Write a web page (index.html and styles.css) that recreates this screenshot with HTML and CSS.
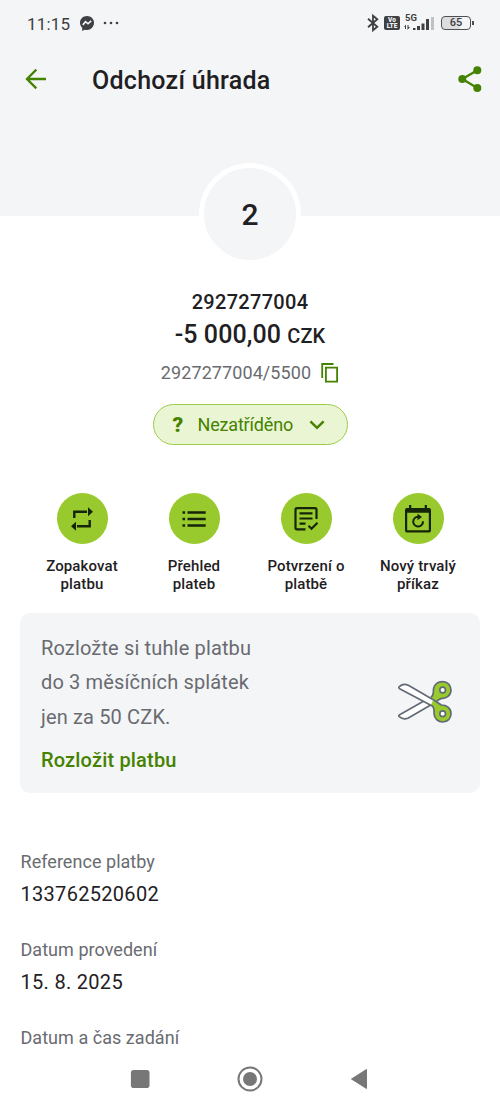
FILE: index.html
```html
<!DOCTYPE html>
<html lang="cs">
<head>
<meta charset="utf-8">
<title>Odchozí úhrada</title>
<link rel="stylesheet" href="styles.css">
</head>
<body>
<header class="header">
  <div class="status">
    <span class="clock">11:15</span>
    <svg class="messenger" width="14" height="15" viewBox="0 0 14 15"><path d="M7 0C3 0 0 2.900 0 6.800c0 2 .9 3.700 2.200 5V15l2.500-1.300c.7.2 1.500.3 2.300.3 4 0 7-3.200 7-7.200S11 0 7 0z" fill="#3e4043"/><path d="M2.800 8.900 5.600 5.700 8 7.800l3.200-2.900" fill="none" stroke="#f4f5f7" stroke-width="1.600"/></svg>
    <svg class="dots" width="16" height="4" viewBox="0 0 16 4" fill="#3e4043"><circle cx="2" cy="2" r="1.300"/><circle cx="8" cy="2" r="1.300"/><circle cx="14" cy="2" r="1.300"/></svg>
    <svg class="bluetooth" width="12" height="18" viewBox="0 0 12 18" fill="none" stroke="#3e4043" stroke-width="1.800"><path d="M1 4.800 10.300 12.700 6 16.300V1.700L10.300 5.300 1 13.200"/></svg>
    <span class="volte"><span>Vo</span><span>LTE</span></span>
    <div class="network">
      <span class="net-type">5G</span>
      <svg width="31" height="16" viewBox="0 0 31 16" fill="#3e4043"><path d="M0 12 2 9.500V14H1V12zM3.500 10h1v2h1.500L3.500 15zM9 13h2.500v2H9zM13 11h3v4h-3zM17.500 8.500h3V15h-3zM22 4h3v11h-3z"/><path d="M27 2h3v13h-3z" fill="#bfc1c4"/></svg>
    </div>
    <div class="battery"><span>65</span></div>
  </div>
  <div class="appbar">
    <svg class="back" width="22" height="22" viewBox="0 0 22 22" fill="none" stroke="#458200" stroke-width="2.300"><path d="M21 11H2M11.300 1.600 2 11l9.300 9.400"/></svg>
    <h1 class="title">Odchozí úhrada</h1>
    <svg class="share" width="24" height="26" viewBox="0 0 24 26"><path d="M19.300 4.300 4.300 13l15 9" fill="none" stroke="#458200" stroke-width="2.300"/><g fill="#458200"><circle cx="19.300" cy="4.300" r="4"/><circle cx="4.300" cy="13" r="4"/><circle cx="19.300" cy="22" r="4"/></g></svg>
  </div>
</header>
<main class="content">
  <section class="summary">
    <div class="avatar">2</div>
    <div class="name">2927277004</div>
    <div class="amount">-5 000,00 <span class="currency">CZK</span></div>
    <div class="account">
      <span class="account-number">2927277004/5500</span>
      <svg width="18" height="20" viewBox="0 0 18 20" fill="none" stroke="#458200" stroke-width="1.800"><path d="M1.200 15V1H12.500"/><path d="M4.900 4.700H16.100V18.600H4.900z"/></svg>
    </div>
    <div class="category">
      <span class="question">?</span>
      <span class="category-name">Nezatříděno</span>
      <svg width="16" height="10" viewBox="0 0 16 10" fill="none" stroke="#458200" stroke-width="2.500"><path d="M1.400 1.400 8 7.800l6.600-6.400"/></svg>
    </div>
  </section>
  <nav class="actions">
    <div class="action">
      <span class="circle"><svg width="26" height="26" viewBox="0 0 26 26"><path d="M5.300 12V5.700H18M20.700 14v6.300H8" fill="none" stroke="#14250a" stroke-width="2.400"/><path d="M19 1.200 24 5.700l-5 4.500zM7 15.800 2 20.300l5 4.500z" fill="#14250a"/></svg></span>
      <span class="label">Zopakovat<br>platbu</span>
    </div>
    <div class="action">
      <span class="circle"><svg width="26" height="26" viewBox="0 0 26 26" fill="#14250a"><path d="M1.500 5.200h2.600v2.600H1.500zM1.500 11.700h2.600v2.600H1.500zM1.500 18.200h2.600v2.600H1.500zM6.500 5.300H24.700v2.400H6.500zM6.500 11.800H24.700v2.400H6.500zM6.500 18.300H24.700v2.400H6.500z"/></svg></span>
      <span class="label">Přehled<br>plateb</span>
    </div>
    <div class="action">
      <span class="circle"><svg width="26" height="26" viewBox="0 0 26 26" fill="none" stroke="#14250a" stroke-width="2.200"><path d="M12.500 23.300H4a1.500 1.500 0 0 1-1.500-1.500V3.700A1.500 1.500 0 0 1 4 2.200H22a1.500 1.500 0 0 1 1.500 1.500V13"/><path d="M6.500 7.300h13M6.500 12.500h13M6.500 17.700h6M15.500 19.700l3 3 6-5.900"/></svg></span>
      <span class="label">Potvrzení o<br>platbě</span>
    </div>
    <div class="action">
      <span class="circle"><svg width="26" height="28" viewBox="0 0 26 28"><path d="M4 0H6.300V3H19.700V0H22V3H24a2 2 0 0 1 2 2V25.500a2 2 0 0 1-2 2H2a2 2 0 0 1-2-2V5a2 2 0 0 1 2-2H4zM2.200 7.800V25.300H23.800V7.800z" fill="#14250a" fill-rule="evenodd"/><path d="M13.200 11.700A4.900 4.900 0 1 0 18 16.300" fill="none" stroke="#14250a" stroke-width="2"/><path d="M12.500 8.800 17 12l-4.500 3.200z" fill="#14250a"/></svg></span>
      <span class="label">Nový trvalý<br>příkaz</span>
    </div>
  </nav>
  <section class="offer">
    <div>
      <p class="offer-text">Rozložte si tuhle platbu<br>do 3 měsíčních splátek<br>jen za 50 CZK.</p>
      <a class="offer-link">Rozložit platbu</a>
    </div>
    <svg class="scissors" width="56" height="45" viewBox="50 58 168 135" stroke="#626a75" stroke-width="5" stroke-linejoin="round">
      <path d="M57 171Q53 168 58 165L136 121l19 13L84 175Q69 182 57 171z" fill="#fff"/>
      <path d="M141 123Q157 116 159 99C158 76 170 66 187 66c15 0 25 11 25 25 0 17-14 26-30 26q-8 2-12 8l-16 10z" fill="#98ca2d" stroke="none"/>
      <path d="M136 121Q157 116 159 99C158 76 170 66 187 66c15 0 25 11 25 25 0 17-14 26-30 26q-8 2-12 8" fill="none"/>
      <path d="M57 81Q53 84 58 87L157 140Q162 145 161 161c1 16 12 26 26 26 15 0 25-11 25-25 0-17-14-26-29-26L84 77Q69 70 57 81z" fill="#98ca2d" stroke="none"/>
      <path d="M57 81Q53 84 58 87L151 137l9-18L84 77Q69 70 57 81z" fill="#fff" stroke="none"/>
      <path d="M183 136Q175 131 165 124L84 77Q69 70 57 81 53 84 58 87L157 140Q162 145 161 161c1 16 12 26 26 26 15 0 25-11 25-25 0-17-14-26-29-26z" fill="none"/>
      <circle cx="187" cy="91" r="8.500" fill="#fff"/><circle cx="187" cy="162" r="8.500" fill="#fff"/>
    </svg>
  </section>
  <dl class="details">
    <dt>Reference platby</dt><dd>133762520602</dd>
    <dt>Datum provedení</dt><dd>15. 8. 2025</dd>
    <dt>Datum a čas zadání</dt>
  </dl>
</main>
<footer class="navbar">
  <svg width="20" height="20" viewBox="0 0 20 20"><rect x=".9" y=".9" width="18.600" height="18.200" rx="2.800" fill="#777"/></svg>
  <svg width="26" height="26" viewBox="0 0 26 26"><circle cx="13" cy="13" r="11.500" fill="none" stroke="#777" stroke-width="2"/><circle cx="13" cy="13" r="7" fill="#777"/></svg>
  <svg width="18" height="22" viewBox="0 0 18 22"><path d="M16.500 1.500V20.500L1.500 11z" fill="#777" stroke="#777" stroke-linejoin="round"/></svg>
</footer>
</body>
</html>
```
FILE: styles.css
```css
* { box-sizing: border-box; }
body {
  margin: 0;
  height: 1111px;
  display: flex;
  flex-direction: column;
  overflow: hidden;
  background: #fff;
  color: #1f2023;
  font-family: Roboto, sans-serif;
}
svg { display: block; flex: none; }
.header { height: 216px; flex: none; background: #f4f5f7; }
.status {
  height: 46px;
  padding: 0 29px 0 27px;
  display: flex;
  align-items: center;
  color: #3e4043;
}
.clock { width: 53px; font-size: 17px; letter-spacing: 0.2px; line-height: 20px; padding-top: 1px; }
.dots { margin-left: 9px; }
.bluetooth { margin-left: auto; }
.volte {
  width: 16px;
  height: 14px;
  margin-left: 5px;
  padding-top: 1px;
  border-radius: 2px;
  background: #3e4043;
  color: #f4f5f7;
  font-size: 6.500px;
  font-weight: 900;
  line-height: 6px;
  text-align: center;
}
.volte span { display: block; }
.network { position: relative; margin-left: 4px; }
.net-type { position: absolute; left: 1px; top: -2px; font-size: 9.500px; line-height: 10px; font-weight: 700; }
.battery {
  position: relative;
  width: 30px;
  height: 14px;
  margin-left: 6px;
  border: 1.500px solid #4d4f52;
  border-radius: 4px;
  background: linear-gradient(90deg, #dcdddf 65%, #f4f5f7 65%);
  font-size: 11px;
  font-weight: 500;
  line-height: 12px;
  text-align: center;
}
.battery::after {
  content: "";
  position: absolute;
  right: -4px;
  top: 4px;
  width: 2px;
  height: 4px;
  background: #4d4f52;
}
.appbar { height: 66px; padding: 0 18px 0 25px; display: flex; align-items: center; }
.title { margin: 4px 0 0 45px; font-size: 25px; line-height: 30px; font-weight: 500; letter-spacing: 0.270px; }
.share { margin-left: auto; }
.content { flex: 1; min-height: 0; overflow: hidden; margin-top: -53px; position: relative; }
.summary { display: flex; flex-direction: column; align-items: center; }
.avatar {
  width: 102px;
  height: 102px;
  border: 5px solid #fff;
  border-radius: 50%;
  background: #f4f5f7;
  font-size: 30px;
  line-height: 94px;
  font-weight: 500;
  text-align: center;
}
.name { margin-top: 23px; font-size: 20px; line-height: 28px; font-weight: 500; letter-spacing: 0.3px; }
.amount { margin-top: 1px; font-size: 25px; line-height: 36px; font-weight: 500; letter-spacing: 0.080px; }
.currency { font-size: 20px; }
.account { height: 38px; display: flex; align-items: center; gap: 10px; color: #696b70; font-size: 18px; letter-spacing: 0.080px; }
.account-number { margin-top: -1px; }
.account svg { margin-top: -1px; }
.category {
  width: 195px;
  height: 41px;
  margin-top: 12px;
  padding: 0 22px 0 19px;
  border: 1.500px solid #9dcc4a;
  border-radius: 21px;
  background: #eaf5d3;
  color: #458200;
  display: flex;
  align-items: center;
  font-size: 18px;
}
.category-name { letter-spacing: -0.180px; }
.question { width: 25px; font-size: 21px; font-weight: 900; }
.category svg { margin-left: auto; }
.actions { margin: 48px 26px 0; display: grid; grid-template-columns: repeat(4, 112px); }
.action { display: flex; flex-direction: column; align-items: center; }
.circle {
  width: 51px;
  height: 51px;
  border-radius: 50%;
  background: #98ca2d;
  display: flex;
  align-items: center;
  justify-content: center;
}
.label { margin-top: 13px; font-size: 15px; line-height: 18px; font-weight: 500; text-align: center; letter-spacing: 0.130px; }
.offer {
  height: 180px;
  margin: 20px 20px 0;
  padding: 18px 27px 0 21px;
  border-radius: 10px;
  background: #f4f5f7;
  display: flex;
  justify-content: space-between;
}
.offer-text { margin: 0 0 11px; color: #696b70; font-size: 20px; line-height: 34.300px; letter-spacing: 0.150px; }
.offer-link { display: block; color: #458200; font-size: 20px; line-height: 30px; font-weight: 500; letter-spacing: 0.170px; }
.scissors { margin-top: 48px; }
.details { margin: 56px 20.500px 0; }
.details dt { color: #696b70; font-size: 18px; line-height: 26px; letter-spacing: 0.040px; }
.details dd { margin: 4px 0 28px; font-size: 20px; line-height: 30px; letter-spacing: 0.300px; }
.navbar { height: 56px; flex: none; padding: 0 132px 8px 130px; display: flex; align-items: center; justify-content: space-between; background: #fff; }
```
